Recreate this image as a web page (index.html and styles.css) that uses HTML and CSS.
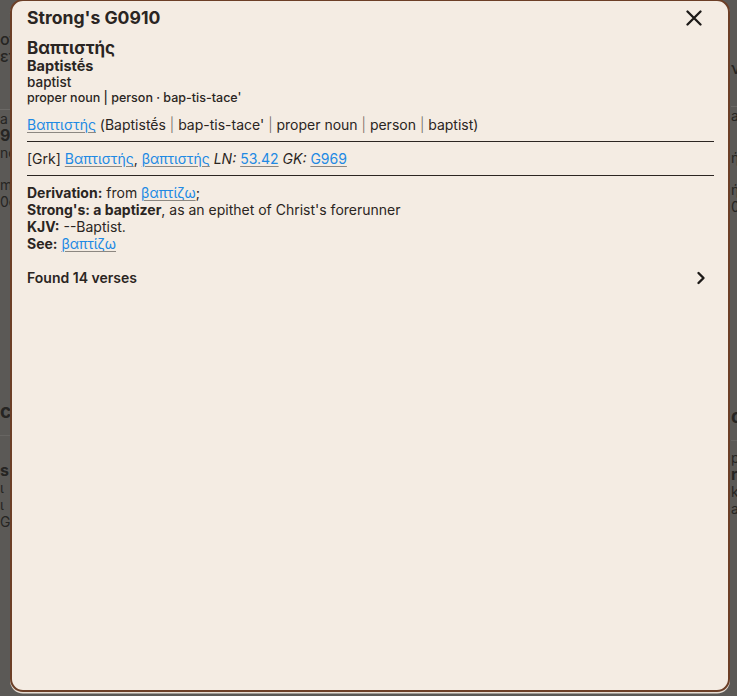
FILE: index.html
```html
<!DOCTYPE html>
<html lang="en">
<head>
<meta charset="utf-8">
<title>Strong's G0910</title>
<link rel="stylesheet" href="styles.css">
</head>
<body>
<div class="page">
  <div class="pane pane-left">
    <div class="bg-title">ονομα<br>ετους</div>
    <div class="bg-rule"></div>
    <div class="bg-line">a</div>
    <div class="bg-line bg-bold">9c</div>
    <div class="bg-line">nό</div>
    <div class="bg-line bg-gap">m</div>
    <div class="bg-line">0e</div>
    <div class="bg-head">ck</div>
    <div class="bg-rule2"></div>
    <div class="bg-line bg-bold bg-gap2">s</div>
    <div class="bg-line">ι</div>
    <div class="bg-line">ι</div>
    <div class="bg-line">G1</div>
  </div>
  <div class="pane pane-right">
    <div class="bg-title bg-title-r">ν</div>
    <div class="bg-rule"></div>
    <div class="bg-line">a</div>
    <div class="bg-line bg-gap3">ή</div>
    <div class="bg-line bg-gap">ή</div>
    <div class="bg-line">0</div>
    <div class="bg-head">ς</div>
    <div class="bg-rule2"></div>
    <div class="bg-line bg-gap4">p</div>
    <div class="bg-line bg-bold">r</div>
    <div class="bg-line">k</div>
    <div class="bg-line">a</div>
  </div>
</div>

<div class="modal">
  <div class="modal-head">
    <h1 class="modal-title">Strong's G0910</h1>
    <button class="close-btn" aria-label="Close">
      <svg width="16" height="16" viewBox="0 0 16 16"><path d="M1.5 1.5 L14.5 14.5 M14.5 1.5 L1.5 14.5" stroke="#1d1a18" stroke-width="2.3" stroke-linecap="round" fill="none"/></svg>
    </button>
  </div>
  <div class="lemma">Βαπτιστής</div>
  <div class="translit">Baptistḗs</div>
  <div class="gloss">baptist</div>
  <div class="meta">proper noun | person · bap-tis-tace'</div>

  <div class="summary"><a href="#" class="lnk">Βαπτιστής</a> (Baptistḗs <span class="sep">|</span> bap-tis-tace' <span class="sep">|</span> proper noun <span class="sep">|</span> person <span class="sep">|</span> baptist)</div>
  <div class="rule"></div>
  <div class="refs">[Grk] <a href="#" class="lnk">Βαπτιστής</a>, <a href="#" class="lnk">βαπτιστής</a> <em>LN:</em> <a href="#" class="lnk">53.42</a> <em>GK:</em> <a href="#" class="lnk">G969</a></div>
  <div class="rule rule2"></div>

  <div class="defs">
    <div><b>Derivation:</b> from <a href="#" class="lnk">βαπτίζω</a>;</div>
    <div><b>Strong's: a baptizer</b>, as an epithet of Christ's forerunner</div>
    <div><b>KJV:</b> --Baptist.</div>
    <div><b>See:</b> <a href="#" class="lnk">βαπτίζω</a></div>
  </div>

  <div class="found">
    <span>Found 14 verses</span>
    <svg class="chev" width="10" height="14" viewBox="0 0 10 14"><path d="M2.5 2 L7.5 7 L2.5 12" stroke="#1d1a18" stroke-width="2.4" stroke-linecap="round" stroke-linejoin="round" fill="none"/></svg>
  </div>
</div>
</body>
</html>
```

FILE: styles.css
```css
* { box-sizing: border-box; }

html, body {
  margin: 0;
  padding: 0;
  width: 737px;
  height: 696px;
  overflow: hidden;
}

body {
  background: #5b5956;
  font-family: "Inter", "Noto Sans", "DejaVu Sans", sans-serif;
  color: #2a2522;
  position: relative;
}

/* dimmed page underneath */
.page {
  display: grid;
  grid-template-columns: 720px 1fr;
  column-gap: 11px;
  height: 696px;
  color: #262523;
}

.bg-title {
  padding-top: 31px;
  font-size: 16px;
  line-height: 17px;
  font-weight: 500;
  white-space: nowrap;
}
.bg-title-r { padding-top: 60px; }

.bg-rule {
  margin-top: 44px;
  height: 1px;
  background: #6b6966;
}
.pane-right .bg-rule { margin-top: 29px; }

.bg-line {
  font-size: 14px;
  line-height: 17px;
  white-space: nowrap;
}
.bg-line:first-of-type { margin-top: 6px; }
.bg-bold { font-weight: 700; font-size: 16px; }
.bg-gap { margin-top: 15px; }
.bg-gap2 { margin-top: 26px; }
.bg-gap3 { margin-top: 25px; }
.bg-gap4 { margin-top: 8px; }

.bg-head {
  margin-top: 190px;
  font-size: 19px;
  font-weight: 700;
  line-height: 24px;
}
.pane-right .bg-head { margin-top: 190px; }

.bg-rule2 {
  margin-top: 11px;
  height: 1px;
  background: #676562;
}

/* modal */
.modal {
  position: absolute;
  left: 10px;
  top: -1px;
  width: 720px;
  height: 693px;
  background: #f4ece3;
  border: 2px solid #6c3f27;
  border-radius: 13px;
  box-shadow: 0 1.5px 0 0 #e6ddd3;
  padding: 6px 14px 0 15px;
  font-size: 14px;
  line-height: 17px;
}

.modal-head {
  display: flex;
  align-items: center;
  justify-content: space-between;
}

.modal-title {
  margin: 0;
  font-size: 17.6px;
  line-height: 22px;
  font-weight: 700;
  color: #2a2522;
}

.close-btn {
  width: 20px;
  height: 20px;
  margin-right: 10px;
  padding: 0;
  border: 0;
  background: none;
  display: flex;
  align-items: center;
  justify-content: center;
}

.lemma {
  margin-top: 9px;
  font-size: 17px;
  line-height: 20px;
  font-weight: 700;
}

.translit {
  font-size: 14.5px;
  line-height: 16px;
  font-weight: 700;
}

.gloss {
  font-size: 13.5px;
  line-height: 16px;
  font-weight: 500;
}

.meta {
  font-size: 12.5px;
  line-height: 16px;
  font-weight: 500;
}

.summary {
  margin-top: 10px;
  line-height: 18px;
}

.sep { color: #6f6862; font-weight: 300; }

.lnk {
  color: #2189e3;
  text-decoration: underline;
  text-decoration-color: #8c8781;
  text-underline-offset: 2px;
  text-decoration-thickness: 1px;
}

.rule {
  margin-top: 7px;
  height: 1px;
  background: #2c2622;
}

.refs {
  margin-top: 8px;
  line-height: 18px;
}

.rule2 { margin-top: 7px; }

.defs {
  margin-top: 8px;
}

.found {
  margin-top: 17px;
  display: flex;
  align-items: center;
  justify-content: space-between;
  line-height: 18px;
  font-weight: 600;
}

.chev { margin-right: 8px; }
```
